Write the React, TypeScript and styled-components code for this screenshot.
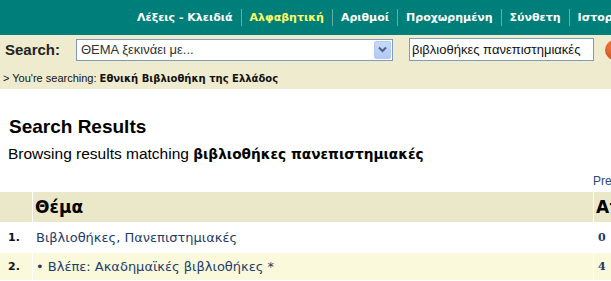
import React from "react";
import styled, { createGlobalStyle } from "styled-components";

const GlobalStyle = createGlobalStyle`
  html, body { margin: 0; padding: 0; background: #ffffff; overflow: hidden; }
  body { font-family: "Liberation Sans", Arial, sans-serif; color: #000; }
  * { box-sizing: border-box; }
`;

const Page = styled.div`
  width: 611px;
  overflow: hidden;
`;

const TopBar = styled.nav`
  height: 35px;
  background: #007f7a;
  display: flex;
  align-items: center;
  padding-left: 129px;
  white-space: nowrap;
`;

const NavItem = styled.span<{ $active?: boolean; $first?: boolean }>`
  font-family: "DejaVu Sans", Tahoma, sans-serif;
  font-weight: bold;
  font-size: 11px;
  line-height: 17px;
  color: ${(p) => (p.$active ? "#ffff66" : "#ffffff")};
  padding: 0 8px;
  border-left: ${(p) => (p.$first ? "none" : "1px solid #5fb0aa")};
`;

const SearchBar = styled.div`
  background: #efebcf;
  height: 54px;
  padding: 3px 0 0 5px;
`;

const SearchRow = styled.div`
  display: flex;
  align-items: center;
  height: 23px;
  white-space: nowrap;
`;

const SearchLabel = styled.span`
  flex: none;
  font-size: 15px;
  font-weight: bold;
  color: #222;
  width: 71px;
`;

const SelectBox = styled.div`
  flex: none;
  width: 317px;
  height: 22px;
  background: #fff;
  border: 1px solid #7f9db9;
  display: flex;
  align-items: center;
  justify-content: space-between;
  padding: 0 1px 0 4px;
`;

const SelectText = styled.span`
  font-size: 13px;
  color: #333;
`;

const SelectArrow = styled.span`
  width: 17px;
  height: 18px;
  background: linear-gradient(#c8d8fb, #b4c8f4);
  border: 1px solid #b5c9f3;
  border-radius: 2px;
  display: flex;
  align-items: center;
  justify-content: center;
`;

const TextInput = styled.div`
  flex: none;
  margin-left: 16px;
  width: 185px;
  height: 23px;
  border: 1px solid #7f9db9;
  background: #fff;
  font-size: 13px;
  color: #111;
  display: flex;
  align-items: center;
  padding-left: 2px;
`;

const GoIcon = styled.span`
  flex: none;
  margin-left: 11px;
  width: 20px;
  height: 20px;
  border-radius: 50%;
  background: radial-gradient(circle at 40% 35%, #f07a45, #c8400f);
  display: flex;
  align-items: center;
  justify-content: center;
`;

const Context = styled.div`
  margin-top: 11px;
  margin-left: -2px;
  font-size: 11px;
  color: #111;
  white-space: nowrap;
`;

const ContextStrong = styled.b`
  font-family: "DejaVu Sans", Tahoma, sans-serif;
  font-size: 10px;
`;

const Main = styled.div`
  padding-top: 27px;
`;

const Title = styled.h1`
  margin: 0 0 0 9px;
  font-size: 19px;
  font-weight: bold;
  line-height: 22px;
`;

const Browsing = styled.div`
  margin: 7px 0 0 8px;
  font-size: 15.5px;
  line-height: 18px;
  white-space: nowrap;
`;

const BrowsingTerm = styled.b`
  font-family: "DejaVu Sans", Tahoma, sans-serif;
  font-size: 13.7px;
`;

const Pager = styled.div`
  margin: 11px 0 0 593px;
  font-size: 12px;
  color: #2d4b72;
  white-space: nowrap;
  line-height: 14px;
`;

const Table = styled.div`
  margin-top: 4px;
  display: grid;
  grid-template-columns: 32px 560px 120px;
  column-gap: 1px;
  row-gap: 1px;
  width: 720px;
`;

const Cell = styled.div<{ $bg: string; $h: number }>`
  background: ${(p) => p.$bg};
  height: ${(p) => p.$h}px;
  display: flex;
  align-items: center;
  white-space: nowrap;
  overflow: hidden;
`;

const HeadText = styled.span`
  font-family: "DejaVu Sans", Tahoma, sans-serif;
  font-weight: bold;
  font-size: 17px;
  padding-left: 2px;
`;

const NumText = styled.span`
  font-family: "DejaVu Sans", Tahoma, sans-serif;
  font-weight: bold;
  font-size: 11px;
  padding-left: 8px;
  color: #111;
`;

const LinkText = styled.span`
  font-family: "DejaVu Sans", Tahoma, sans-serif;
  font-size: 13px;
  color: #1d3c6c;
  padding-left: 3px;
`;

const CountText = styled.span`
  font-family: "DejaVu Serif", Georgia, serif;
  font-weight: bold;
  font-size: 11px;
  color: #1d3c6c;
  padding-left: 4px;
`;

const navItems = ["Λέξεις - Κλειδιά", "Αλφαβητική", "Αριθμοί", "Προχωρημένη", "Σύνθετη", "Ιστορικό"];

const rows = [
  { n: "1.", text: "Βιβλιοθήκες, Πανεπιστημιακές", count: "0", bg: "#ffffff", h: 29 },
  { n: "2.", text: "• Βλέπε: Ακαδημαϊκές βιβλιοθήκες *", count: "4", bg: "#fbf9dc", h: 27 },
];

export default function App() {
  return (
    <Page>
      <GlobalStyle />
      <TopBar>
        {navItems.map((t, i) => (
          <NavItem key={t} $first={i === 0} $active={i === 1}>
            {t}
          </NavItem>
        ))}
      </TopBar>
      <SearchBar>
        <SearchRow>
          <SearchLabel>Search:</SearchLabel>
          <SelectBox>
            <SelectText>ΘΕΜΑ ξεκινάει με...</SelectText>
            <SelectArrow>
              <svg width="9" height="7" viewBox="0 0 9 7">
                <path d="M1 1.5 L4.5 5 L8 1.5" fill="none" stroke="#4d6185" strokeWidth="2" />
              </svg>
            </SelectArrow>
          </SelectBox>
          <TextInput>βιβλιοθήκες πανεπιστημιακές</TextInput>
          <GoIcon>
            <svg width="10" height="10" viewBox="0 0 10 10">
              <path d="M2 5 H8 M5.5 2.5 L8 5 L5.5 7.5" fill="none" stroke="#fff" strokeWidth="1.6" />
            </svg>
          </GoIcon>
        </SearchRow>
        <Context>
          &gt; You're searching: <ContextStrong>Εθνική Βιβλιοθήκη της Ελλάδος</ContextStrong>
        </Context>
      </SearchBar>
      <Main>
        <Title>Search Results</Title>
        <Browsing>
          Browsing results matching <BrowsingTerm>βιβλιοθήκες πανεπιστημιακές</BrowsingTerm>
        </Browsing>
        <Pager>Previous</Pager>
        <Table>
          <Cell $bg="#ebe8c9" $h={30} />
          <Cell $bg="#ebe8c9" $h={30}>
            <HeadText>Θέμα</HeadText>
          </Cell>
          <Cell $bg="#ebe8c9" $h={30}>
            <HeadText>Αποτελέσματα</HeadText>
          </Cell>
          {rows.map((r) => (
            <React.Fragment key={r.n}>
              <Cell $bg={r.bg} $h={r.h}>
                <NumText>{r.n}</NumText>
              </Cell>
              <Cell $bg={r.bg} $h={r.h}>
                <LinkText>{r.text}</LinkText>
              </Cell>
              <Cell $bg={r.bg} $h={r.h}>
                <CountText>{r.count}</CountText>
              </Cell>
            </React.Fragment>
          ))}
        </Table>
      </Main>
    </Page>
  );
}
